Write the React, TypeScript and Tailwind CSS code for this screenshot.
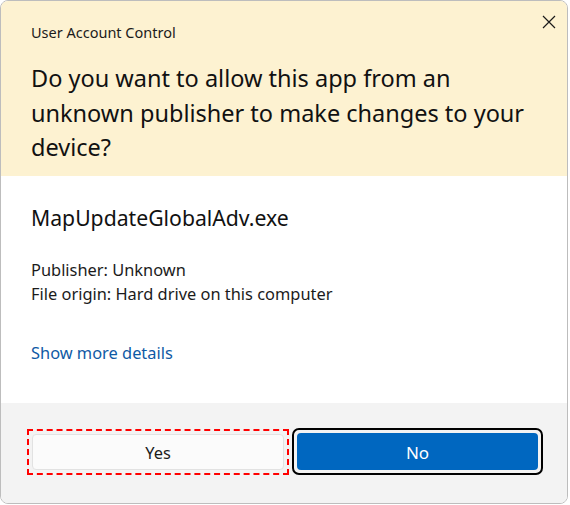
import React from "react";

export default function App() {
  return (
    <div className="w-[570px] h-[505px] bg-white" style={{ fontFamily: '"Segoe UI", "Noto Sans", sans-serif' }}>
      <div className="w-[568px] h-[504px] border border-[#bdbdbd] rounded-[8px] overflow-hidden flex flex-col">
        <div className="bg-[#fdf2d1] h-[175px] shrink-0 flex flex-col relative">
          <div className="pl-[30px] pt-[21px] text-[14.5px] leading-[20px] text-[#1b1b1b]">User Account Control</div>
          <div className="absolute right-[10px] top-[13px] w-[16px] h-[16px]">
            <svg width="16" height="16" viewBox="0 0 16 16">
              <path d="M2 2 L14 14 M14 2 L2 14" stroke="#1b1b1b" strokeWidth="1.2" fill="none" />
            </svg>
          </div>
          <div className="pl-[30px] pr-[30px] pt-[19px] text-[23.5px] leading-[34.5px] text-[#111]">
            Do you want to allow this app from an unknown publisher to make changes to your device?
          </div>
        </div>
        <div className="flex-1 bg-white pl-[30px]">
          <div className="pt-[28px] text-[21.2px] leading-[28px] text-[#111]">MapUpdateGlobalAdv.exe</div>
          <div className="pt-[26px] text-[16.4px] leading-[24px] text-[#1b1b1b]">
            <div>Publisher: Unknown</div>
            <div>File origin: Hard drive on this computer</div>
          </div>
          <div className="pt-[35px] text-[16.4px] leading-[24px] text-[#0f5aa5]">Show more details</div>
        </div>
        <div className="h-[100px] shrink-0 bg-[#f3f3f3] flex items-start pt-[26px] pl-[26px]">
          <div className="border-2 border-dashed border-[#ff0000] p-[3px]">
            <div className="w-[252px] h-[36px] rounded-[4px] bg-[#fbfbfb] border border-[#e2e2e2] flex items-center justify-center pt-[3px] text-[16.4px] text-[#1b1b1b]">
              Yes
            </div>
          </div>
          <div className="ml-[3px] mt-[-1px] border-2 border-black rounded-[7px] p-[3px]">
            <div className="w-[241px] h-[37px] rounded-[4px] bg-[#0067c0] flex items-center justify-center pt-[3px] text-[17px] text-white">
              No
            </div>
          </div>
        </div>
      </div>
    </div>
  );
}
